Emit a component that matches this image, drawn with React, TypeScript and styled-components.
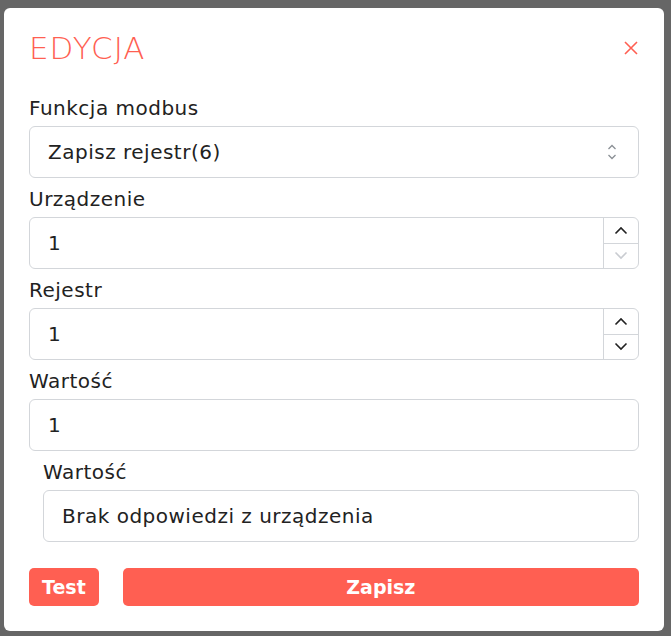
import React from "react";
import styled, { createGlobalStyle } from "styled-components";

const Global = createGlobalStyle`
  html, body {
    margin: 0;
    padding: 0;
    background: #666666;
  }
  body {
    font-family: "DejaVu Sans", "Liberation Sans", sans-serif;
  }
  * { box-sizing: border-box; }
`;

const ACCENT = "#ff5f52";

const Chevron = ({ dir, color }: { dir: "up" | "down"; color: string }) => (
  <svg width="14" height="9" viewBox="0 0 14 9">
    <path
      d={dir === "up" ? "M1.5 7.5 L7 2 L12.5 7.5" : "M1.5 1.5 L7 7 L12.5 1.5"}
      fill="none"
      stroke={color}
      strokeWidth="1.6"
    />
  </svg>
);

export default function App() {
  return (
    <>
      <Global />
      <Backdrop>
        <Modal>
          <Header>
            <Title>EDYCJA</Title>
            <Close aria-label="close">
              <svg width="14" height="14" viewBox="0 0 14 14">
                <path d="M1 1 L13 13 M13 1 L1 13" stroke={ACCENT} strokeWidth="1.6" />
              </svg>
            </Close>
          </Header>

          <Label>Funkcja modbus</Label>
          <Field>
            <Value>Zapisz rejestr(6)</Value>
            <SelectIcon>
              <svg width="10" height="18" viewBox="0 0 10 18">
                <path d="M1.5 6 L5 2.5 L8.5 6 M1.5 12 L5 15.5 L8.5 12" fill="none" stroke="#8a8f95" strokeWidth="1.3" />
              </svg>
            </SelectIcon>
          </Field>

          <Label>Urządzenie</Label>
          <Field>
            <Value>1</Value>
            <Spinner>
              <SpinBtn>
                <Chevron dir="up" color="#222" />
              </SpinBtn>
              <SpinBtn>
                <Chevron dir="down" color="#c9ccd1" />
              </SpinBtn>
            </Spinner>
          </Field>

          <Label>Rejestr</Label>
          <Field>
            <Value>1</Value>
            <Spinner>
              <SpinBtn>
                <Chevron dir="up" color="#222" />
              </SpinBtn>
              <SpinBtn>
                <Chevron dir="down" color="#222" />
              </SpinBtn>
            </Spinner>
          </Field>

          <Label>Wartość</Label>
          <Field>
            <Value>1</Value>
          </Field>

          <Response>
            <Label>Wartość</Label>
            <Field>
              <Value>Brak odpowiedzi z urządzenia</Value>
            </Field>
          </Response>

          <Actions>
            <Button>Test</Button>
            <Button $wide>Zapisz</Button>
          </Actions>
        </Modal>
      </Backdrop>
    </>
  );
}

const Backdrop = styled.div`
  width: 671px;
  height: 636px;
  padding: 8px 7px 5px 4px;
`;

const Modal = styled.div`
  background: #fff;
  border-radius: 6px;
  height: 623px;
  padding: 0 25px 0 25px;
  display: flex;
  flex-direction: column;
`;

const Header = styled.div`
  height: 79px;
  display: flex;
  align-items: center;
  justify-content: space-between;
`;

const Title = styled.h1`
  margin: 0;
  font-size: 31px;
  font-weight: 200;
  color: ${ACCENT};
  letter-spacing: 1px;
`;

const Close = styled.button`
  border: none;
  background: none;
  padding: 0;
  margin-right: 1px;
  display: flex;
`;

const Label = styled.label`
  display: block;
  height: 39px;
  padding-top: 6px;
  line-height: 30px;
  font-size: 20px;
  letter-spacing: 0.5px;
  color: #222;
`;

const Field = styled.div`
  height: 52px;
  border: 1px solid #d3d6da;
  border-radius: 6px;
  display: flex;
  align-items: center;
  justify-content: space-between;
  overflow: hidden;
`;

const Value = styled.span`
  padding-left: 18px;
  font-size: 20px;
  letter-spacing: 0.5px;
  color: #222;
`;

const SelectIcon = styled.span`
  display: flex;
  margin-right: 21px;
`;

const Spinner = styled.div`
  align-self: stretch;
  width: 35px;
  border-left: 1px solid #d3d6da;
  display: flex;
  flex-direction: column;
`;

const SpinBtn = styled.div`
  flex: 1;
  display: flex;
  align-items: center;
  justify-content: center;
  & + & {
    border-top: 1px solid #d3d6da;
  }
`;

const Response = styled.div`
  padding-left: 14px;
`;

const Actions = styled.div`
  margin-top: 26px;
  display: flex;
  gap: 24px;
`;

const Button = styled.button<{ $wide?: boolean }>`
  flex: ${(p) => (p.$wide ? 1 : "0 0 auto")};
  height: 38px;
  padding: 0 13px;
  border: none;
  border-radius: 5px;
  background: ${ACCENT};
  color: #fff;
  font-family: "DejaVu Sans", "Liberation Sans", sans-serif;
  font-size: 19px;
  font-weight: 700;
`;
